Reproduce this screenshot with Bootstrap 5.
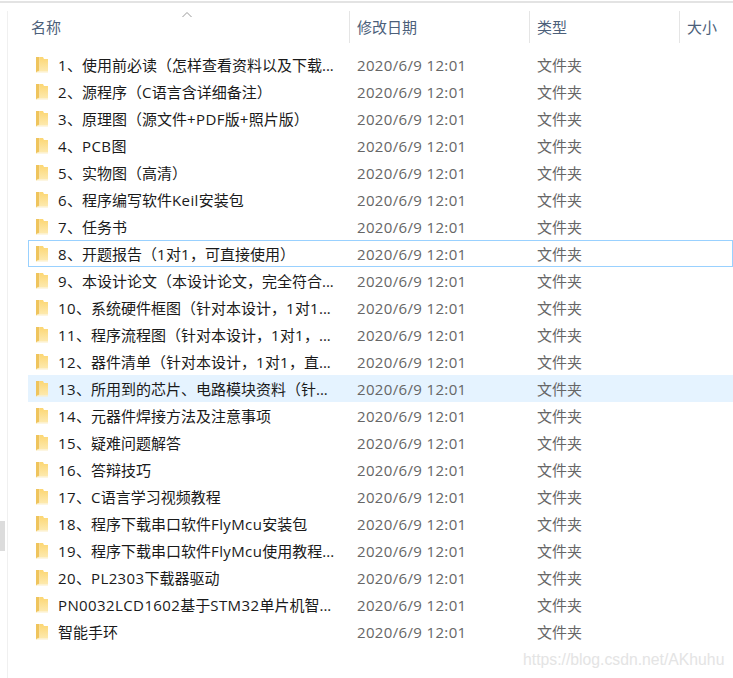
<!DOCTYPE html>
<html lang="zh-CN">
<head>
  <meta charset="UTF-8">
  <meta name="viewport" content="width=device-width, initial-scale=1.0">
  <title>文件夹</title>
  <link href="https://cdn.jsdelivr.net/npm/bootstrap@5.3.0/dist/css/bootstrap.min.css" rel="stylesheet">
  <style>
    body {
      background: #fff;
      font-family: "Open Sans", "Noto Sans CJK SC", sans-serif;
      font-size: 15px;
      overflow: hidden;
      padding-top: 1px;
    }
    .explorer {
      position: relative;
      width: 733px;
      height: 677px;
      border-top: 2px solid #e3e3e3;
      overflow: hidden;
    }
    .pane {
      margin-left: 7px;
      margin-top: 8px;
      height: 667px;
      border-left: 1px solid #f0f0f0;
    }
    .head-row, .file-row {
      display: grid;
      grid-template-columns: 321px 180px 150px 1fr;
      margin-left: 20px;
      white-space: nowrap;
    }
    .head-row {
      position: relative;
      height: 32px;
      margin-bottom: 8px;
      color: #4c607a;
      line-height: 32px;
    }
    .head-cell {
      padding-left: 3px;
    }
    .head-cell + .head-cell {
      border-left: 1px solid #e5e5e5;
      padding-left: 7px;
    }
    .sort-arrow {
      position: absolute;
      left: 153px;
      top: 0;
      display: block;
    }
    .file-row {
      height: 27px;
      line-height: 27px;
      color: #666;
      border: 1px solid transparent;
    }
    .file-row.is-hot { background: #e5f3ff; border-color: #e5f3ff; }
    .file-row.is-focus { border-color: #99d1ff; }
    .name-cell {
      display: flex;
      align-items: center;
      padding-left: 7px;
      color: #1a1a1a;
    }
    .name-cell svg { flex: none; margin-right: 10px; margin-top: -3px; }
    .date-cell { padding-left: 7px; letter-spacing: .35px; }
    .type-cell { padding-left: 7px; }
    .latin-run { letter-spacing: .4px; }
    .scroll-thumb {
      position: absolute;
      left: 0;
      top: 518px;
      width: 5px;
      height: 30px;
      background: #dcdcdc;
    }
    .watermark {
      position: absolute;
      left: 523px;
      top: 647px;
      color: #e4e4e4;
      font-family: "Liberation Sans", sans-serif;
      font-size: 15.75px;
      line-height: 20px;
    }
  </style>
</head>
<body>
  <div class="explorer">
    <div class="scroll-thumb"></div>
    <div class="pane">
      <div class="head-row">
        <svg class="sort-arrow" width="12" height="7" viewBox="0 0 12 7"><path d="M1.5 6 L6 1.5 L10.5 6" fill="none" stroke="#9a9a9a" stroke-width="1"/></svg>
        <div class="head-cell">名称</div>
        <div class="head-cell">修改日期</div>
        <div class="head-cell">类型</div>
        <div class="head-cell">大小</div>
      </div>
      <div id="rows"></div>
    </div>
    <div class="watermark">https://blog.csdn.net/AKhuhu</div>
  </div>

  <script src="https://cdn.jsdelivr.net/npm/bootstrap@5.3.0/dist/js/bootstrap.bundle.min.js"></script>
  <script>
    // 文件夹列表
    const names = [
      '1、使用前必读（怎样查看资料以及下载...',
      '2、源程序（C语言含详细备注）',
      '3、原理图（源文件+PDF版+照片版）',
      '4、PCB图',
      '5、实物图（高清）',
      '6、程序编写软件Keil安装包',
      '7、任务书',
      '8、开题报告（1对1，可直接使用）',
      '9、本设计论文（本设计论文，完全符合...',
      '10、系统硬件框图（针对本设计，1对1...',
      '11、程序流程图（针对本设计，1对1，...',
      '12、器件清单（针对本设计，1对1，直...',
      '13、所用到的芯片、电路模块资料（针...',
      '14、元器件焊接方法及注意事项',
      '15、疑难问题解答',
      '16、答辩技巧',
      '17、C语言学习视频教程',
      '18、程序下载串口软件FlyMcu安装包',
      '19、程序下载串口软件FlyMcu使用教程...',
      '20、PL2303下载器驱动',
      'PN0032LCD1602基于STM32单片机智...',
      '智能手环'
    ];
    const folder = '<svg width="12" height="17" viewBox="0 0 12 17">' +
      '<defs><linearGradient id="fold" x1="0" y1="0" x2="0" y2="1">' +
      '<stop offset="0" stop-color="#fcd672"/><stop offset="1" stop-color="#fdeab0"/></linearGradient></defs>' +
      '<path d="M0 1 H3.5 V15 L0 16.5 Z" fill="#efc45c"/>' +
      '<path d="M3.5 1 H7 L8 3 H12 V15.5 H1 L3.5 14.5 Z" fill="url(#fold)"/>' +
      '<path d="M1 15.5 H12 V16.5 H0 Z" fill="#fbeec4"/></svg>';
    document.getElementById('rows').innerHTML = names.map(function (name, i) {
      let cls = 'file-row';
      if (i === 7) cls += ' is-focus';
      if (i === 12) cls += ' is-hot';
      const label = name.replace(/[A-Za-z0-9+]+/g, '<span class="latin-run">$&</span>');
      return '<div class="' + cls + '"><div class="name-cell">' + folder + '<span>' + label + '</span></div>' +
        '<div class="date-cell">2020/6/9 12:01</div><div class="type-cell">文件夹</div><div></div></div>';
    }).join('');
  </script>
</body>
</html>
